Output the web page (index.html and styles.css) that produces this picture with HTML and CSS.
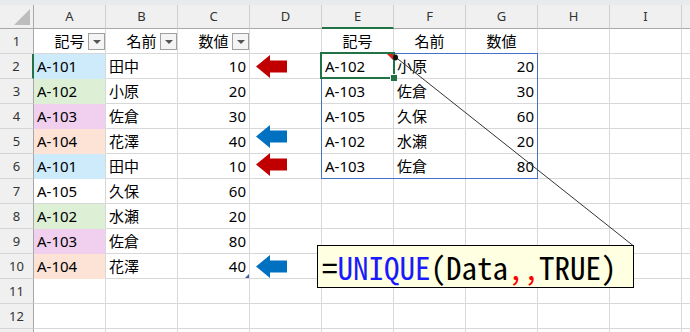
FILE: index.html
```html
<!DOCTYPE html>
<html lang="ja">
<head>
<meta charset="utf-8">
<link rel="stylesheet" href="styles.css">
</head>
<body>
<div class="sheet">
  <div class="topband"></div>
  <div class="grid">
    <div class="hd corner"><svg class="corner-tri" width="16" height="16" viewBox="0 0 16 16"><polygon points="16,0 16,16 0,16" fill="#bdbdbd"/></svg></div>
    <div class="hd col">A</div><div class="hd col">B</div><div class="hd col">C</div><div class="hd col">D</div><div class="hd col sel-col">E</div><div class="hd col">F</div><div class="hd col">G</div><div class="hd col">H</div><div class="hd col">I</div><div class="hd col last"></div>

    <div class="hd row">1</div>
    <div class="c th">記号<span class="fb"></span></div><div class="c th">名前<span class="fb"></span></div><div class="c th">数値<span class="fb"></span></div>
    <div class="c"></div><div class="c ctr">記号</div><div class="c ctr">名前</div><div class="c ctr">数値</div><div class="c"></div><div class="c"></div><div class="c last"></div>

    <div class="hd row sel-row">2</div>
    <div class="c f-blue">A-101</div><div class="c">田中</div><div class="c num">10</div>
    <div class="c"></div><div class="c">A-102</div><div class="c">小原</div><div class="c num">20</div><div class="c"></div><div class="c"></div><div class="c last"></div>

    <div class="hd row">3</div>
    <div class="c f-green">A-102</div><div class="c">小原</div><div class="c num">20</div>
    <div class="c"></div><div class="c">A-103</div><div class="c">佐倉</div><div class="c num">30</div><div class="c"></div><div class="c"></div><div class="c last"></div>

    <div class="hd row">4</div>
    <div class="c f-pink">A-103</div><div class="c">佐倉</div><div class="c num">30</div>
    <div class="c"></div><div class="c">A-105</div><div class="c">久保</div><div class="c num">60</div><div class="c"></div><div class="c"></div><div class="c last"></div>

    <div class="hd row">5</div>
    <div class="c f-peach">A-104</div><div class="c">花澤</div><div class="c num">40</div>
    <div class="c"></div><div class="c">A-102</div><div class="c">水瀬</div><div class="c num">20</div><div class="c"></div><div class="c"></div><div class="c last"></div>

    <div class="hd row">6</div>
    <div class="c f-blue">A-101</div><div class="c">田中</div><div class="c num">10</div>
    <div class="c"></div><div class="c">A-103</div><div class="c">佐倉</div><div class="c num">80</div><div class="c"></div><div class="c"></div><div class="c last"></div>

    <div class="hd row">7</div>
    <div class="c">A-105</div><div class="c">久保</div><div class="c num">60</div>
    <div class="c"></div><div class="c"></div><div class="c"></div><div class="c"></div><div class="c"></div><div class="c"></div><div class="c last"></div>

    <div class="hd row">8</div>
    <div class="c f-green">A-102</div><div class="c">水瀬</div><div class="c num">20</div>
    <div class="c"></div><div class="c"></div><div class="c"></div><div class="c"></div><div class="c"></div><div class="c"></div><div class="c last"></div>

    <div class="hd row">9</div>
    <div class="c f-pink">A-103</div><div class="c">佐倉</div><div class="c num">80</div>
    <div class="c"></div><div class="c"></div><div class="c"></div><div class="c"></div><div class="c"></div><div class="c"></div><div class="c last"></div>

    <div class="hd row">10</div>
    <div class="c f-peach">A-104</div><div class="c">花澤</div><div class="c num">40<span class="resize"></span></div>
    <div class="c"></div><div class="c"></div><div class="c"></div><div class="c"></div><div class="c"></div><div class="c"></div><div class="c last"></div>

    <div class="hd row">11</div>
    <div class="c"></div><div class="c"></div><div class="c"></div><div class="c"></div><div class="c"></div><div class="c"></div><div class="c"></div><div class="c"></div><div class="c"></div><div class="c last"></div>

    <div class="hd row">12</div>
    <div class="c"></div><div class="c"></div><div class="c"></div><div class="c"></div><div class="c"></div><div class="c"></div><div class="c"></div><div class="c"></div><div class="c"></div><div class="c last"></div>

    <div class="hd row"></div>
    <div class="c"></div><div class="c"></div><div class="c"></div><div class="c"></div><div class="c"></div><div class="c"></div><div class="c"></div><div class="c"></div><div class="c"></div><div class="c last"></div>
  </div>

  <div class="spill"></div>
  <div class="selection"><span class="note-mark"></span><span class="handle"></span></div>

  <svg class="arrow a-r2" viewBox="0 0 31 23"><polygon points="0,11.5 14,0 14,5.5 31,5.5 31,17.5 14,17.5 14,23"/></svg>
  <svg class="arrow blue a-b5" viewBox="0 0 31 23"><polygon points="0,11.5 14,0 14,5.5 31,5.5 31,17.5 14,17.5 14,23"/></svg>
  <svg class="arrow a-r6" viewBox="0 0 31 23"><polygon points="0,11.5 14,0 14,5.5 31,5.5 31,17.5 14,17.5 14,23"/></svg>
  <svg class="arrow blue a-b10" viewBox="0 0 31 23"><polygon points="0,11.5 14,0 14,5.5 31,5.5 31,17.5 14,17.5 14,23"/></svg>

  <svg class="leader" width="690" height="332" viewBox="0 0 690 332">
    <line x1="396" y1="57.5" x2="633" y2="245.5" stroke="#333" stroke-width="1"/>
    <ellipse cx="395.5" cy="57.5" rx="2.5" ry="3" fill="#111"/>
  </svg>

  <div class="callout"><span class="formula"><span class="op">=</span><span class="fn">UNIQUE</span>(Data<span class="sep">,,</span>TRUE)</span></div>
</div>
</body>
</html>
```

FILE: styles.css
```css
html, body {
  margin: 0;
  padding: 0;
  background: #ffffff;
}

.sheet {
  position: relative;
  width: 690px;
  height: 332px;
  overflow: hidden;
  font-family: "Noto Sans", "Noto Sans CJK JP", sans-serif;
}

.topband {
  height: 5px;
  background: #e8ebee;
}

.grid {
  display: grid;
  grid-template-columns: 34px repeat(9, 72px) 1fr;
  grid-template-rows: 24px repeat(13, 25px);
}

.hd {
  box-sizing: border-box;
  background: #f0f0f0;
  color: #333333;
  font-size: 13px;
  display: flex;
  justify-content: center;
}

.hd.col {
  border-right: 1px solid #cfcfcf;
  border-bottom: 1px solid #a8a8a8;
  align-items: flex-start;
  line-height: 16px;
  padding-top: 3px;
}

.hd.col.sel-col {
  border-bottom: 2px solid #217346;
}

.hd.col.last {
  border-right: none;
}

.hd.corner {
  border-right: 1px solid #a8a8a8;
  border-bottom: 1px solid #a8a8a8;
  position: relative;
}

.corner-tri {
  position: absolute;
  right: 3px;
  bottom: 3px;
}

.hd.row {
  border-right: 1px solid #a8a8a8;
  border-bottom: 1px solid #d4d4d4;
  align-items: center;
  line-height: 24px;
}

.hd.row.sel-row {
  border-right: 2px solid #217346;
}

.c {
  box-sizing: border-box;
  position: relative;
  border-right: 1px solid #d8d8d8;
  border-bottom: 1px solid #d8d8d8;
  font-size: 15px;
  line-height: 24px;
  color: #000000;
  padding: 0 3px;
  white-space: nowrap;
}

.c.last {
  border-right: none;
}

.c.num {
  text-align: right;
}

.c.ctr,
.c.th {
  text-align: center;
}

.fb {
  position: absolute;
  right: 0;
  top: 4px;
  width: 17px;
  height: 17px;
  box-sizing: border-box;
  border: 1px solid #a0a0a0;
  background: #f4f4f4;
}

.fb::after {
  content: "";
  position: absolute;
  left: 4px;
  top: 6px;
  border-left: 4px solid transparent;
  border-right: 4px solid transparent;
  border-top: 4px solid #555555;
}

.f-blue { background: #cdebfa; border-bottom-color: #cdebfa; }
.f-green { background: #ddf0d6; border-bottom-color: #ddf0d6; }
.f-pink { background: #f0d0ee; border-bottom-color: #f0d0ee; }
.f-peach { background: #fce3d6; border-bottom-color: #fce3d6; }

.resize {
  position: absolute;
  right: 0;
  bottom: 0;
  width: 0;
  height: 0;
  border-left: 4px solid transparent;
  border-bottom: 4px solid #3f5aa8;
}

.spill {
  position: absolute;
  left: 321px;
  top: 53px;
  width: 217px;
  height: 126px;
  box-sizing: border-box;
  border: 1px solid #4472c4;
}

.selection {
  position: absolute;
  left: 320px;
  top: 52px;
  width: 75px;
  height: 27px;
  box-sizing: border-box;
  border: 2px solid #217346;
}

.note-mark {
  position: absolute;
  right: 0;
  top: 0;
  width: 0;
  height: 0;
  border-left: 6px solid transparent;
  border-top: 6px solid #e0201a;
}

.handle {
  position: absolute;
  right: -4px;
  bottom: -4px;
  width: 6px;
  height: 6px;
  background: #217346;
  border-left: 1px solid #ffffff;
  border-top: 1px solid #ffffff;
}

.arrow {
  position: absolute;
  left: 256px;
  width: 31px;
  height: 23px;
  fill: #c00000;
}

.arrow.blue {
  fill: #0070c0;
}

.a-r2 { top: 55px; }
.a-b5 { top: 125px; }
.a-r6 { top: 153px; }
.a-b10 { top: 255px; }

.leader {
  position: absolute;
  left: 0;
  top: 0;
}

.callout {
  position: absolute;
  left: 317px;
  top: 245px;
  width: 317px;
  height: 43px;
  box-sizing: border-box;
  border: 1px solid #000000;
  background: #ffffe1;
  padding-left: 4px;
  display: flex;
  align-items: center;
}

.formula {
  font-family: "Noto Sans Mono CJK JP", "DejaVu Sans Mono", monospace;
  font-size: 31px;
  line-height: 1;
  color: #000000;
  white-space: nowrap;
}

.formula .fn { color: #1a1aff; }
.formula .sep { color: #ff0000; }
```
